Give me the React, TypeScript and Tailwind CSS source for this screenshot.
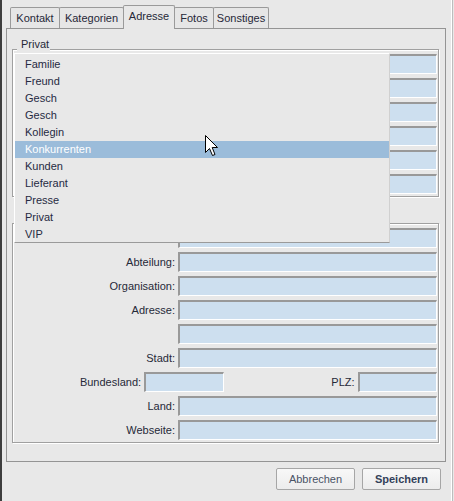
import React from "react";

const FONT = "font-['Liberation_Sans',Arial,sans-serif]";

function Field({ className = "" }: { className?: string }) {
  return (
    <div
      className={`h-[20px] border-t-2 border-l-2 border-r border-b border-t-[#999999] border-l-[#999999] border-r-white border-b-white bg-[#cddfef] ${className}`}
    />
  );
}

function Label({ text }: { text: string }) {
  return (
    <div className="h-[20px] text-right text-[11px] leading-[20px] text-[#262838] whitespace-nowrap">
      {text}
    </div>
  );
}

function Group({
  title,
  className = "",
  children,
}: {
  title?: string;
  className?: string;
  children: React.ReactNode;
}) {
  return (
    <div
      className={`relative w-[427px] border border-[#a0a0a0] shadow-[inset_1px_1px_0_#ffffff,1px_1px_0_#ffffff] pt-[4px] pb-[2px] pr-[1px] ${className}`}
    >
      {title && (
        <span className="absolute left-[4px] -top-[12px] h-[13px] pl-[4px] pr-[1px] bg-[#e8e8e8] text-[11px] leading-[13px] text-[#262838]">
          {title}
        </span>
      )}
      {children}
    </div>
  );
}

function Row({ label }: { label: string }) {
  return (
    <>
      <Label text={label} />
      <Field />
    </>
  );
}

const tabs = [
  { name: "Kontakt", w: "w-[50px]" },
  { name: "Kategorien", w: "w-[65px]" },
  { name: "Adresse", w: "w-[52px]", active: true },
  { name: "Fotos", w: "w-[40px]" },
  { name: "Sonstiges", w: "w-[56px]" },
];

const categories = [
  "Familie",
  "Freund",
  "Gesch",
  "Gesch",
  "Kollegin",
  "Konkurrenten",
  "Kunden",
  "Lieferant",
  "Presse",
  "Privat",
  "VIP",
];

function Cursor() {
  return (
    <svg
      className="absolute left-[205px] top-[135px]"
      width="13"
      height="22"
      viewBox="0 0 13 22"
    >
      <path
        d="M0.5 0.5 L0.5 17.5 L4.5 13.5 L7.5 20.5 L10 19.5 L7.2 12.5 L12.5 12.5 Z"
        fill="#ffffff"
        stroke="#000000"
        strokeWidth="1"
        strokeLinejoin="miter"
      />
    </svg>
  );
}

export default function App() {
  return (
    <div className={`relative flex w-[454px] h-[501px] bg-[#e8e8e8] overflow-hidden ${FONT}`}>
      <div className="flex flex-col w-[451px] h-full border-l-2 border-[#3d3d3d]">
        {/* tab strip */}
        <div className="flex items-end h-[28px] pl-[8px] pt-[5px]">
          {tabs.map((t, i) => (
            <div
              key={t.name}
              className={`${t.w} ${i > 0 ? "-ml-px" : ""} flex items-center justify-center border-t border-l border-r border-[#9a9a9a] rounded-t-[2px] text-[11px] text-[#262838] ${
                t.active
                  ? "relative z-10 h-[24px] -mb-px bg-[#e8e8e8] pb-[2px]"
                  : "h-[21px] bg-[#e6e6e6]"
              }`}
            >
              {t.name}
            </div>
          ))}
        </div>

        {/* tab page */}
        <div className="ml-[4px] w-[440px] h-[434px] border border-[#949494] pl-[5px] pt-[20px]">
          <Group title="Privat">
            <div className="grid grid-cols-[162px_259px] gap-x-[3px] gap-y-[4px]">
              <Row label="Straße:" />
              <Row label="" />
              <Row label="Stadt:" />
              <Row label="PLZ:" />
              <Row label="Telefon:" />
              <Row label="E-Mail:" />
            </div>
          </Group>

          <Group className="mt-[26px]">
            <div className="grid grid-cols-[162px_259px] gap-x-[3px] gap-y-[4px]">
              <Row label="Position:" />
              <Row label="Abteilung:" />
              <Row label="Organisation:" />
              <Row label="Adresse:" />
              <Row label="" />
              <Row label="Stadt:" />
              <div className="col-span-2 flex gap-x-[3px]">
                <div className="w-[129px]">
                  <Label text="Bundesland:" />
                </div>
                <Field className="w-[80px]" />
                <div className="w-[129px]">
                  <Label text="PLZ:" />
                </div>
                <Field className="w-[80px]" />
              </div>
              <Row label="Land:" />
              <Row label="Webseite:" />
            </div>
          </Group>
        </div>

        {/* dialog buttons */}
        <div className="flex justify-end gap-[7px] mt-[6px] pr-[10px]">
          <button className="w-[79px] h-[22px] border border-[#a6a6a6] rounded-[2px] bg-gradient-to-b from-[#f8f8f8] to-[#ececec] text-[11px] text-[#4a5366]">
            Abbrechen
          </button>
          <button className="w-[79px] h-[22px] border border-[#a6a6a6] rounded-[2px] bg-gradient-to-b from-[#f8f8f8] to-[#ececec] text-[11px] font-bold text-[#33415a]">
            Speichern
          </button>
        </div>
      </div>
      <div className="w-px h-full bg-white" />
      <div className="w-px h-full bg-[#bdbdbd]" />
      <div className="flex-1 h-full" />

      {/* open category popup */}
      <div className="absolute left-[14px] top-[53px] w-[376px] h-[190px] border border-t-white border-l-white border-r-[#d0d0d0] border-b-[#9a9a9a] bg-[#e8e8e8] pt-[2px]">
        {categories.map((c, i) => (
          <div
            key={i}
            className={`h-[17px] pl-[10px] text-[11px] leading-[17px] ${
              c === "Konkurrenten" ? "bg-[#9bbcda] text-white" : "text-[#262a42]"
            }`}
          >
            {c}
          </div>
        ))}
      </div>

      <Cursor />
    </div>
  );
}
